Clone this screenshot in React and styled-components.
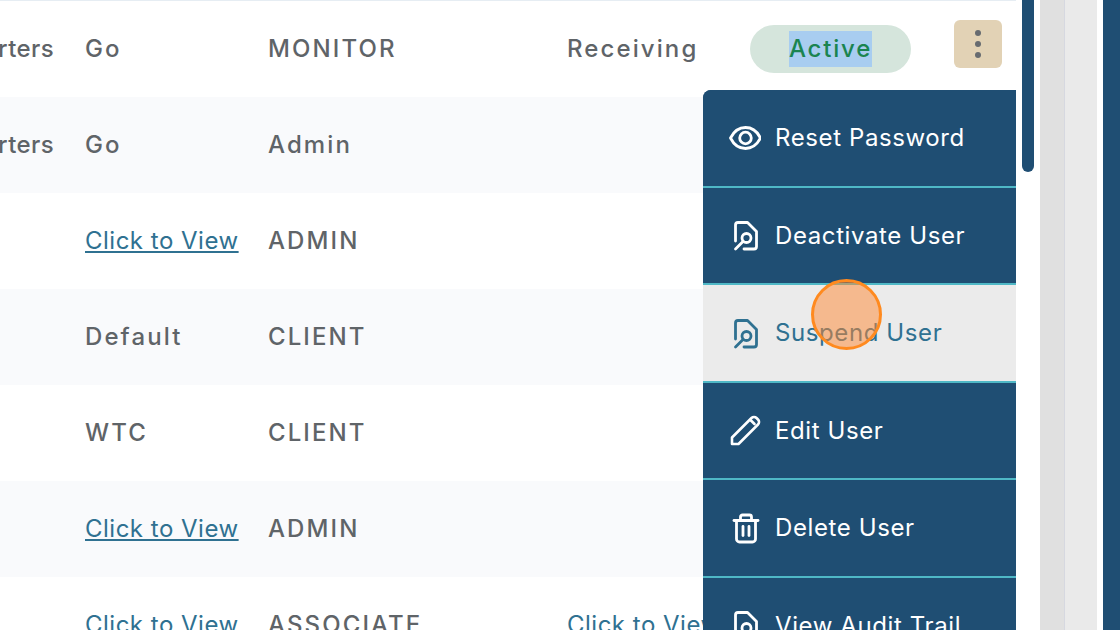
import styled, { createGlobalStyle } from "styled-components";

const GlobalStyle = createGlobalStyle`
  html, body {
    margin: 0;
    background: #fff;
    overflow: hidden;
  }
  * {
    box-sizing: border-box;
  }
`;

const rows = [
  { place: "Headquarters", group: "Go", role: "MONITOR", dept: "Receiving", status: "Active" },
  { place: "Headquarters", group: "Go", role: "Admin" },
  { groupLink: true, role: "ADMIN" },
  { group: "Default", role: "CLIENT" },
  { group: "WTC", role: "CLIENT" },
  { groupLink: true, role: "ADMIN" },
  { groupLink: true, role: "ASSOCIATE", deptLink: true },
];

function EyeIcon() {
  return (
    <svg width="32" height="24" viewBox="0 0 32 24" fill="none" stroke="currentColor" strokeWidth="2.8" strokeLinejoin="round">
      <path d="M1.500 12C5 5 10.500 1.500 16.500 1.500S28 5 31.500 12C28 19 22.500 22.500 16.500 22.500S5 19 1.500 12z" />
      <circle cx="16.500" cy="12" r="5.800" />
    </svg>
  );
}

function FileSearchIcon() {
  return (
    <svg width="32" height="32" viewBox="0 0 32 32" fill="none" stroke="currentColor" strokeWidth="2.8" strokeLinecap="round" strokeLinejoin="round">
      <path d="M6.500 22V6A2.500 2.500 0 0 1 9 3.500h9.500l9 9v15a2.500 2.500 0 0 1-2.500 2.500H15" />
      <circle cx="17.500" cy="19" r="4.500" />
      <path d="M14 22.500 6.500 30" />
    </svg>
  );
}

function PencilIcon() {
  return (
    <svg width="32" height="32" viewBox="0 0 32 32" fill="none" stroke="currentColor" strokeWidth="2.6" strokeLinecap="round" strokeLinejoin="round">
      <path d="M3 23.500 22.500 4a3.500 3.500 0 0 1 5 0l1.500 1.500a3.500 3.500 0 0 1 0 5L9.500 30H3z" />
      <path d="M22 6.500l3.500 3.500" />
    </svg>
  );
}

function TrashIcon() {
  return (
    <svg width="32" height="32" viewBox="0 0 32 32" fill="none" stroke="currentColor" strokeWidth="2.8" strokeLinecap="round" strokeLinejoin="round">
      <path d="M5 8.500h24" />
      <path d="M11.500 8.500V5a2 2 0 0 1 2-2h7a2 2 0 0 1 2 2v3.500" />
      <path d="M7.500 8.500V27a3 3 0 0 0 3 3h13a3 3 0 0 0 3-3V8.500" />
      <path d="M14 14.500v9" />
      <path d="M20 14.500v9" />
    </svg>
  );
}

const menuItems = [
  { label: "Reset Password", icon: <EyeIcon /> },
  { label: "Deactivate User", icon: <FileSearchIcon /> },
  { label: "Suspend User", icon: <FileSearchIcon />, hovered: true },
  { label: "Edit User", icon: <PencilIcon /> },
  { label: "Delete User", icon: <TrashIcon /> },
  { label: "View Audit Trail", icon: <FileSearchIcon /> },
];

function App() {
  return (
    <Page>
      <GlobalStyle />
      <TableArea>
        <Table>
          {rows.map((row, i) => (
            <Row key={i} $alt={i % 2 === 1}>
              <PlaceCell>{row.place}</PlaceCell>
              <Cell>{row.groupLink ? <ViewLink href="#">Click to View</ViewLink> : row.group}</Cell>
              <Cell>{row.role}</Cell>
              <Cell>{row.deptLink ? <ViewLink href="#">Click to View</ViewLink> : row.dept}</Cell>
              <StatusCell>
                {row.status && (
                  <StatusPill>
                    <Selected>{row.status}</Selected>
                  </StatusPill>
                )}
              </StatusCell>
              <ActionCell>
                {i === 0 && (
                  <KebabButton>
                    <Dot />
                    <Dot />
                    <Dot />
                  </KebabButton>
                )}
              </ActionCell>
            </Row>
          ))}
        </Table>
        <Menu>
          {menuItems.map((item) => (
            <MenuItem key={item.label} $hovered={item.hovered}>
              <MenuIcon>{item.icon}</MenuIcon>
              {item.label}
              {item.hovered && <ClickMarker />}
            </MenuItem>
          ))}
        </Menu>
      </TableArea>
      <ScrollTrack>
        <ScrollThumb />
      </ScrollTrack>
      <GutterDark />
      <GutterLight />
      <EdgeBar />
    </Page>
  );
}

const Page = styled.div`
  display: flex;
  width: 1120px;
  height: 630px;
  overflow: hidden;
  background: #fff;
  font-family: Inter, "Liberation Sans", sans-serif;
`;

const TableArea = styled.div`
  position: relative;
  width: 1016px;
  height: 630px;
  overflow: hidden;
  flex: none;
`;

const Table = styled.div`
  border-top: 1px solid #e6edf3;
`;

const Row = styled.div`
  display: grid;
  grid-template-columns: 85px 183px 299px 183px 204px 1fr;
  height: 96px;
  align-items: center;
  background: ${(p) => (p.$alt ? "#f9fafc" : "#fff")};
  color: #5f6468;
  font-size: 24px;
  font-weight: 500;
  letter-spacing: 2.1px;
`;

const Cell = styled.div`
  margin-top: -2px;
  white-space: nowrap;
  overflow: hidden;
`;

const PlaceCell = styled(Cell)`
  display: flex;
  justify-content: flex-end;
  padding-right: 31px;
  letter-spacing: 0.4px;
`;

const ViewLink = styled.a`
  color: #2f7191;
  font-weight: 400;
  letter-spacing: 0.5px;
`;

const StatusCell = styled.div`
  display: flex;
  justify-content: flex-end;
  padding-right: 43px;
`;

const StatusPill = styled.div`
  display: flex;
  align-items: center;
  justify-content: center;
  width: 161px;
  height: 48px;
  border-radius: 24px;
  background: #d5e5dc;
  color: #1a8450;
`;

const Selected = styled.span`
  background: #a8cdf0;
  line-height: 36px;
  letter-spacing: 1.8px;
`;

const ActionCell = styled.div`
  display: flex;
  align-items: flex-start;
  height: 48px;
  margin-top: -10px;
`;

const KebabButton = styled.div`
  display: flex;
  flex-direction: column;
  align-items: center;
  justify-content: center;
  gap: 5px;
  width: 48px;
  height: 48px;
  border-radius: 6px;
  background: #e2d2b5;
`;

const Dot = styled.span`
  width: 6px;
  height: 6px;
  border-radius: 50%;
  background: #676b70;
`;

const Menu = styled.div`
  position: absolute;
  top: 90px;
  left: 703px;
  width: 313px;
  border-top-left-radius: 8px;
  overflow: hidden;
  background: #1f4e73;
`;

const MenuItem = styled.div`
  position: relative;
  display: flex;
  align-items: center;
  gap: 14px;
  height: 97.5px;
  padding-left: 26px;
  border-bottom: 2px solid #4fb8c6;
  background: ${(p) => (p.$hovered ? "#ebebeb" : "#1f4e73")};
  color: ${(p) => (p.$hovered ? "#2f7191" : "#fff")};
  font-size: 24px;
  font-weight: 400;
  letter-spacing: 0.6px;
  white-space: nowrap;
`;

const MenuIcon = styled.span`
  display: flex;
  align-items: center;
  justify-content: center;
  width: 32px;
  height: 34px;
`;

const ClickMarker = styled.span`
  position: absolute;
  top: -6px;
  left: 108px;
  width: 71px;
  height: 71px;
  border-radius: 50%;
  border: 3px solid #ff8a1f;
  background: rgba(255, 135, 50, 0.5);
`;

const ScrollTrack = styled.div`
  flex: none;
  width: 24px;
  padding: 0 6px;
`;

const ScrollThumb = styled.div`
  width: 12px;
  height: 172px;
  border-radius: 0 0 6px 6px;
  background: #1f4e73;
`;

const GutterDark = styled.div`
  flex: none;
  width: 25px;
  background: #e0e0e0;
  border-right: 1px solid #d6d8e0;
`;

const GutterLight = styled.div`
  flex: none;
  width: 32px;
  margin-right: 6px;
  background: #eaeaea;
`;

const EdgeBar = styled.div`
  flex: 1;
  background: #1f4e73;
`;

export default App;
